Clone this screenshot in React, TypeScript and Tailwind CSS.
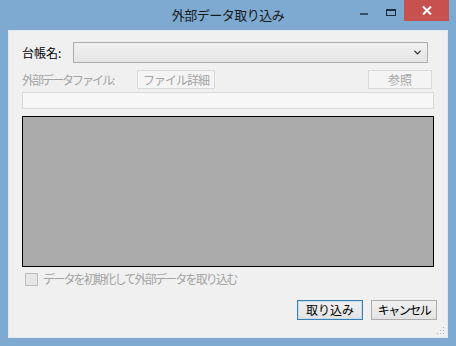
import { ChevronDown } from 'lucide-react';

const font = { fontFamily: '"Noto Sans CJK JP", "Noto Sans", sans-serif' };

function WinButton({ label, disabled, primary, className }: { label: string; disabled?: boolean; primary?: boolean; className?: string }) {
  const base = 'flex shrink-0 items-center justify-center border text-[12px] leading-none';
  if (disabled) {
    return <div className={`${base} border-[#d9d9d9] bg-[#f4f4f4] text-[#a3a3a3] ${className ?? ''}`}>{label}</div>;
  }
  return (
    <div
      className={`${base} bg-gradient-to-b from-[#f0f0f0] to-[#e3e3e3] text-black ${primary ? 'border-[#3c7fb1] shadow-[inset_0_0_0_1px_#c2dcf0]' : 'border-[#acacac]'} ${className ?? ''}`}
    >
      {label}
    </div>
  );
}

export default function App() {
  return (
    <div className="flex h-[346px] w-[456px] flex-col bg-[#7eaad2]" style={font}>
      {/* title bar */}
      <div className="relative flex h-[30px] items-center justify-center">
        <span className="text-[13px] tracking-[-0.5px] text-[#1a1a1a]">外部データ取り込み</span>
        {/* caption buttons */}
        <div className="absolute left-[360px] top-[13px] h-[2px] w-[8px] bg-[#3d5166]" />
        <div className="absolute left-[386px] top-[9px] h-[7px] w-[10px] border border-t-2 border-[#1e2b3a]" />
        <div className="absolute left-[404px] top-0 flex h-[21px] w-[45px] items-center justify-center bg-[#c7514e]">
          <svg width="10" height="9" viewBox="0 0 10 9">
            <path d="M1 0.5 L9 8.5 M9 0.5 L1 8.5" stroke="#fff" strokeWidth="2" />
          </svg>
        </div>
      </div>

      {/* client area */}
      <div className="mx-[8px] mb-[8px] flex flex-1 flex-col border border-[#e2e9f1] bg-[#f0f0f0] px-[13px] pt-[11px]">
        <div className="flex h-[21px] items-center">
          <span className="w-[51px] text-[12px] text-black">台帳名:</span>
          <div className="flex h-[21px] w-[355px] items-center justify-end border border-[#acacac] bg-gradient-to-b from-[#f0f0f0] to-[#e5e5e5] pr-[4px]">
            <ChevronDown size={11} strokeWidth={3} className="text-[#333]" />
          </div>
        </div>

        <div className="mt-[7px] flex h-[19px] items-center">
          <span className="w-[115px] text-[12px] tracking-[-2px] text-[#a3a3a3]">外部データファイル:</span>
          <WinButton label="ファイル詳細" disabled className="h-[19px] w-[78px] tracking-[-1px]" />
          <div className="flex-1" />
          <WinButton label="参照" disabled className="mr-[2px] h-[19px] w-[64px]" />
        </div>

        <div className="mt-[3px] h-[17px] w-[412px] border border-[#dadada] bg-[#f7f7f7]" />

        <div className="mt-[7px] h-[151px] w-[412px] border border-black bg-[#ababab]" />

        <div className="mt-[5px] flex h-[14px] items-center">
          <div className="ml-[3px] h-[13px] w-[13px] shrink-0 border border-[#bcbcbc] bg-[#e6e6e6]" />
          <span className="ml-[5px] text-[12px] tracking-[-1.8px] text-[#a3a3a3]">データを初期化して外部データを取り込む</span>
        </div>

        <div className="mr-[-3px] mt-[14px] flex justify-end gap-[8px]">
          <WinButton label="取り込み" primary className="h-[20px] w-[66px]" />
          <WinButton label="キャンセル" className="h-[20px] w-[66px] tracking-[-1.5px]" />
        </div>

        <div className="mt-auto flex justify-end pb-[2px]">
          <svg width="8" height="8" viewBox="0 0 8 8" className="mr-[-11px]">
            <rect x="6" y="0" width="1" height="1" fill="#b8b8b8" />
            <rect x="3" y="3" width="1" height="1" fill="#b8b8b8" />
            <rect x="6" y="3" width="1" height="1" fill="#b8b8b8" />
            <rect x="0" y="6" width="1" height="1" fill="#b8b8b8" />
            <rect x="3" y="6" width="1" height="1" fill="#b8b8b8" />
            <rect x="6" y="6" width="1" height="1" fill="#b8b8b8" />
          </svg>
        </div>
      </div>
    </div>
  );
}
